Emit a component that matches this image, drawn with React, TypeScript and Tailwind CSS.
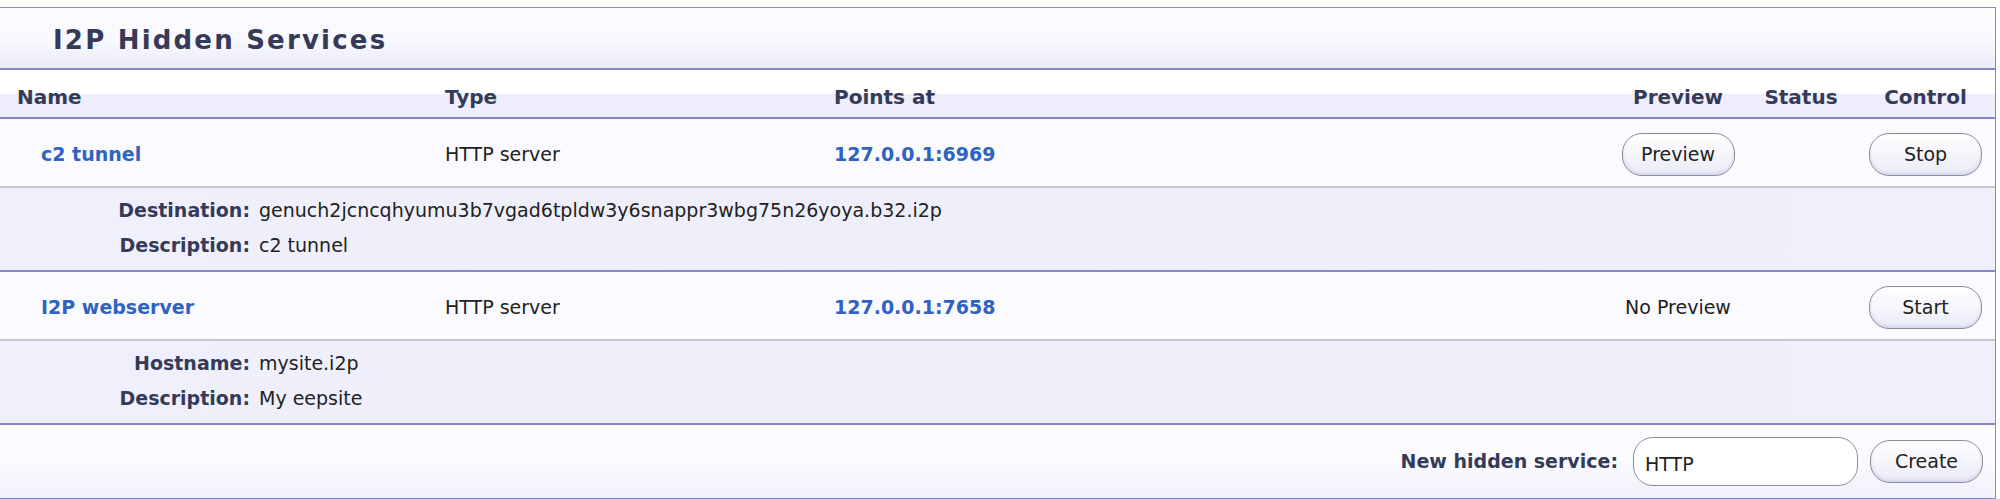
import React from "react";

type Service = {
  name: string;
  type: string;
  target: string;
  preview: boolean;
  action: string;
  details: [string, string][];
};

const services: Service[] = [
  {
    name: "c2 tunnel",
    type: "HTTP server",
    target: "127.0.0.1:6969",
    preview: true,
    action: "Stop",
    details: [
      ["Destination:", "genuch2jcncqhyumu3b7vgad6tpldw3y6snappr3wbg75n26yoya.b32.i2p"],
      ["Description:", "c2 tunnel"],
    ],
  },
  {
    name: "I2P webserver",
    type: "HTTP server",
    target: "127.0.0.1:7658",
    preview: false,
    action: "Start",
    details: [
      ["Hostname:", "mysite.i2p"],
      ["Description:", "My eepsite"],
    ],
  },
];

const Pill = ({ label }: { label: string }) => (
  <button className="h-[43px] w-[113px] rounded-[20px] border border-[#8c8c9c] bg-gradient-to-b from-white to-[#ebebf8] text-[19px] text-[#222] shadow-[inset_0_-2px_3px_rgba(190,190,230,0.5)]">
    {label}
  </button>
);

export default function App() {
  return (
    <div className="min-h-[499px] bg-white pt-[7px] font-['DejaVu_Sans',Verdana,sans-serif] text-[19px] text-[#222]">
      <div className="w-[1996px] border-y border-r border-[#8787c8]">
        {/* title */}
        <div className="flex h-[62px] items-center border-b-2 border-[#8787c8] bg-gradient-to-b from-[#fcfcff] via-[#f9f9fe] to-[#ececf9] pl-[53px] pt-[4px]">
          <h1 className="text-[26px] font-bold tracking-[2.2px] text-[#353a58]">I2P Hidden Services</h1>
        </div>
        {/* header */}
        <div className="flex h-[49px] items-center border-b-2 border-[#8787c8] bg-[linear-gradient(to_bottom,#ffffff_0,#ffffff_50%,#eeeefc_50%,#eeeefc_100%)] pt-[6px] text-[20px] font-bold text-[#353a58]">
          <div className="w-[445px] pl-[17px]">Name</div>
          <div className="w-[389px]">Type</div>
          <div className="w-[776px]">Points at</div>
          <div className="w-[136px] text-center">Preview</div>
          <div className="w-[110px] text-center">Status</div>
          <div className="w-[139px] text-center">Control</div>
        </div>
        {services.map(s => (
          <div key={s.name}>
            <div className="flex h-[69px] items-center border-b-2 border-[#c6c6d0] bg-[#fafaff] pt-[4px]">
              <div className="w-[445px] pl-[41px] font-bold text-[#2f63c0]">{s.name}</div>
              <div className="w-[389px]">{s.type}</div>
              <div className="w-[776px] font-bold text-[#2f63c0]">{s.target}</div>
              <div className="flex w-[136px] justify-center">
                {s.preview ? <Pill label="Preview" /> : <span className="whitespace-nowrap">No Preview</span>}
              </div>
              <div className="w-[110px]"></div>
              <div className="flex w-[139px] justify-center">
                <Pill label={s.action} />
              </div>
            </div>
            <div className="border-b-2 border-[#8787c8] bg-gradient-to-r from-[#f0f0fc] via-[#eeeefb] to-[#f0f0fc] pt-[5px] pb-[7px]">
              {s.details.map(([k, v]) => (
                <div key={k} className="flex h-[35px] items-center">
                  <div className="w-[250px] text-right font-bold text-[#353a58]">{k}</div>
                  <div className="pl-[9px]">{v}</div>
                </div>
              ))}
            </div>
          </div>
        ))}
        {/* footer */}
        <div className="flex h-[73px] items-center justify-end bg-gradient-to-b from-[#fcfcff] via-[#fafaff] to-[#f1f1fb] pr-[12px]">
          <span className="font-bold text-[#353a58]">New hidden service:</span>
          <input
            readOnly
            value="HTTP"
            className="ml-[15px] h-[49px] w-[225px] rounded-[20px] border border-[#8c8c9c] bg-white pl-[11px] pt-[4px] text-[19px] text-[#222] outline-none"
          />
          <div className="ml-[12px]">
            <Pill label="Create" />
          </div>
        </div>
      </div>
    </div>
  );
}
